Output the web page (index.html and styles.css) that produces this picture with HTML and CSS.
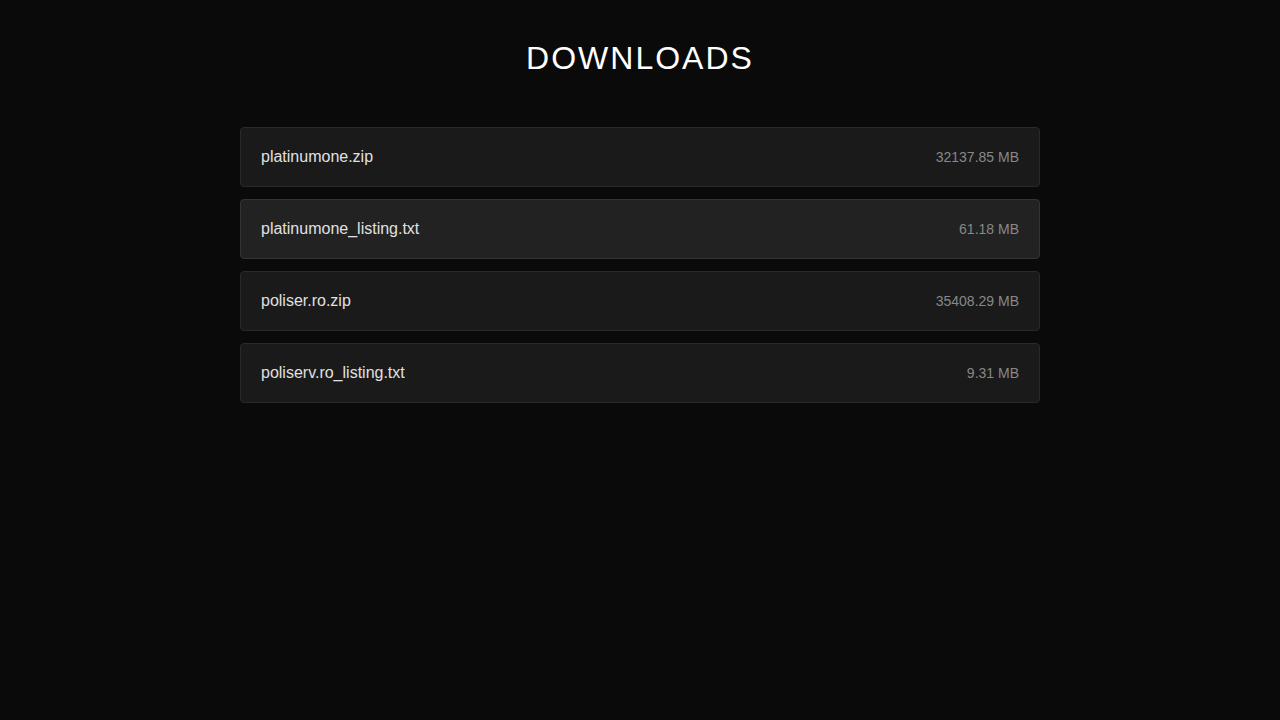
FILE: index.html
```html
<!DOCTYPE html>
<html lang="en">
<head>
    <meta charset="UTF-8">
    <meta name="viewport" content="width=device-width, initial-scale=1.0">
    <title>Downloads</title>
    <link rel="stylesheet" href="styles.css">
</head>
<body>

<div class="container">
    <h1>DOWNLOADS</h1>

    <!-- Lista dei file -->
    <div class="file-list">
        <a class="file" href="#">
            <span class="file-name">platinumone.zip</span>
            <span class="file-size">32137.85 MB</span>
        </a>
        <a class="file hover" href="#">
            <span class="file-name">platinumone_listing.txt</span>
            <span class="file-size">61.18 MB</span>
        </a>
        <a class="file" href="#">
            <span class="file-name">poliser.ro.zip</span>
            <span class="file-size">35408.29 MB</span>
        </a>
        <a class="file" href="#">
            <span class="file-name">poliserv.ro_listing.txt</span>
            <span class="file-size">9.31 MB</span>
        </a>
    </div>
</div>

</body>
</html>
```
FILE: styles.css
```css
/* Impostazioni generali */
body {
    margin: 0;
    font-family: "Liberation Sans", Arial, sans-serif;
    background-color: #0a0a0a;
    color: #e0e0e0;
    height: 100vh;
}

.container {
    max-width: 800px;
    margin: 0 auto;
    padding-top: 40px;
}

h1 {
    margin: 0 0 50px;
    font-size: 32px;
    font-weight: normal;
    letter-spacing: 2px;
    text-align: center;
    color: #ffffff;
}

.file-list {
    display: flex;
    flex-direction: column;
    gap: 12px;
}

.file {
    display: flex;
    justify-content: space-between;
    align-items: center;
    padding: 20px;
    background-color: #1a1a1a;
    border: 1px solid #2a2a2a;
    border-radius: 4px;
    text-decoration: none;
    line-height: 18px;
}

.file:hover,
.file.hover {
    background-color: #222222;
    border-color: #333333;
}

.file-name {
    font-size: 16px;
    color: #e0e0e0;
}

.file-size {
    font-size: 14px;
    color: #888888;
}
```
